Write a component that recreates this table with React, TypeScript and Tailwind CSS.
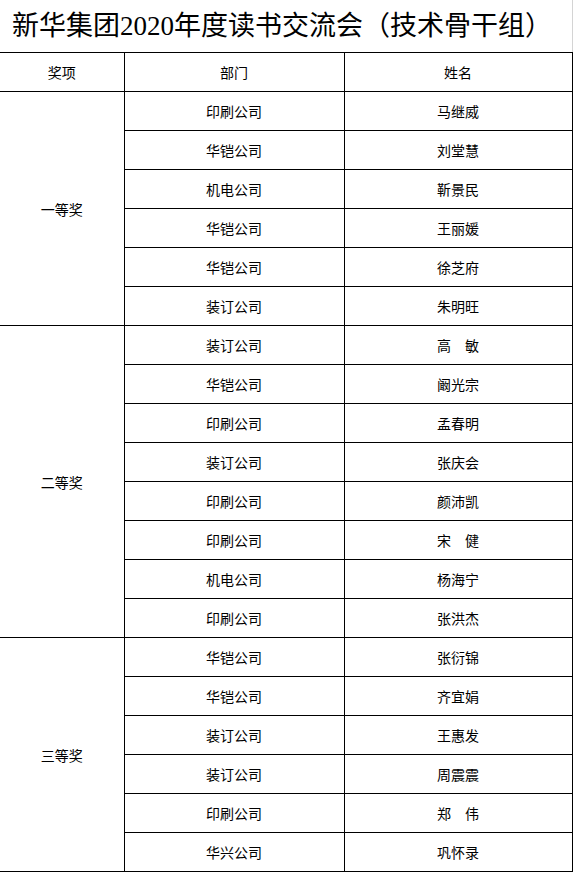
import React from 'react';

type Group = { award: string; rows: [string, string][] };

const groups: Group[] = [
  {
    award: '一等奖',
    rows: [
      ['印刷公司', '马继威'],
      ['华铠公司', '刘堂慧'],
      ['机电公司', '靳景民'],
      ['华铠公司', '王丽媛'],
      ['华铠公司', '徐芝府'],
      ['装订公司', '朱明旺'],
    ],
  },
  {
    award: '二等奖',
    rows: [
      ['装订公司', '高　敏'],
      ['华铠公司', '阚光宗'],
      ['印刷公司', '孟春明'],
      ['装订公司', '张庆会'],
      ['印刷公司', '颜沛凯'],
      ['印刷公司', '宋　健'],
      ['机电公司', '杨海宁'],
      ['印刷公司', '张洪杰'],
    ],
  },
  {
    award: '三等奖',
    rows: [
      ['华铠公司', '张衍锦'],
      ['华铠公司', '齐宜娟'],
      ['装订公司', '王惠发'],
      ['装订公司', '周震震'],
      ['印刷公司', '郑　伟'],
      ['华兴公司', '巩怀录'],
    ],
  },
];

const cell = 'border border-black h-[39px] p-0 text-center align-middle';

export default function App() {
  return (
    <div className="w-[573px] bg-white border-r border-[#d4d4d4] text-black font-['Noto_Sans_CJK_SC',sans-serif]">
      {/* Title */}
      <div className="h-[52px] flex items-center pl-[12px] text-[27px] leading-none font-['Liberation_Serif','Noto_Sans_CJK_SC',serif]">
        新华集团2020年度读书交流会（技术骨干组）
      </div>

      <table className="table-fixed border-collapse w-[572px] text-[14px] leading-none border-l-0">
        <colgroup>
          <col className="w-[124px]" />
          <col className="w-[220px]" />
          <col className="w-[228px]" />
        </colgroup>
        <thead>
          <tr>
            <th className={`${cell} border-l-0 font-normal`}>奖项</th>
            <th className={`${cell} font-normal`}>部门</th>
            <th className={`${cell} font-normal`}>姓名</th>
          </tr>
        </thead>
        <tbody>
          {groups.map((g) =>
            g.rows.map(([dept, name], i) => (
              <tr key={g.award + i}>
                {i === 0 && (
                  <td rowSpan={g.rows.length} className={`${cell} border-l-0`}>
                    {g.award}
                  </td>
                )}
                <td className={cell}>{dept}</td>
                <td className={cell}>{name}</td>
              </tr>
            ))
          )}
        </tbody>
      </table>
    </div>
  );
}
